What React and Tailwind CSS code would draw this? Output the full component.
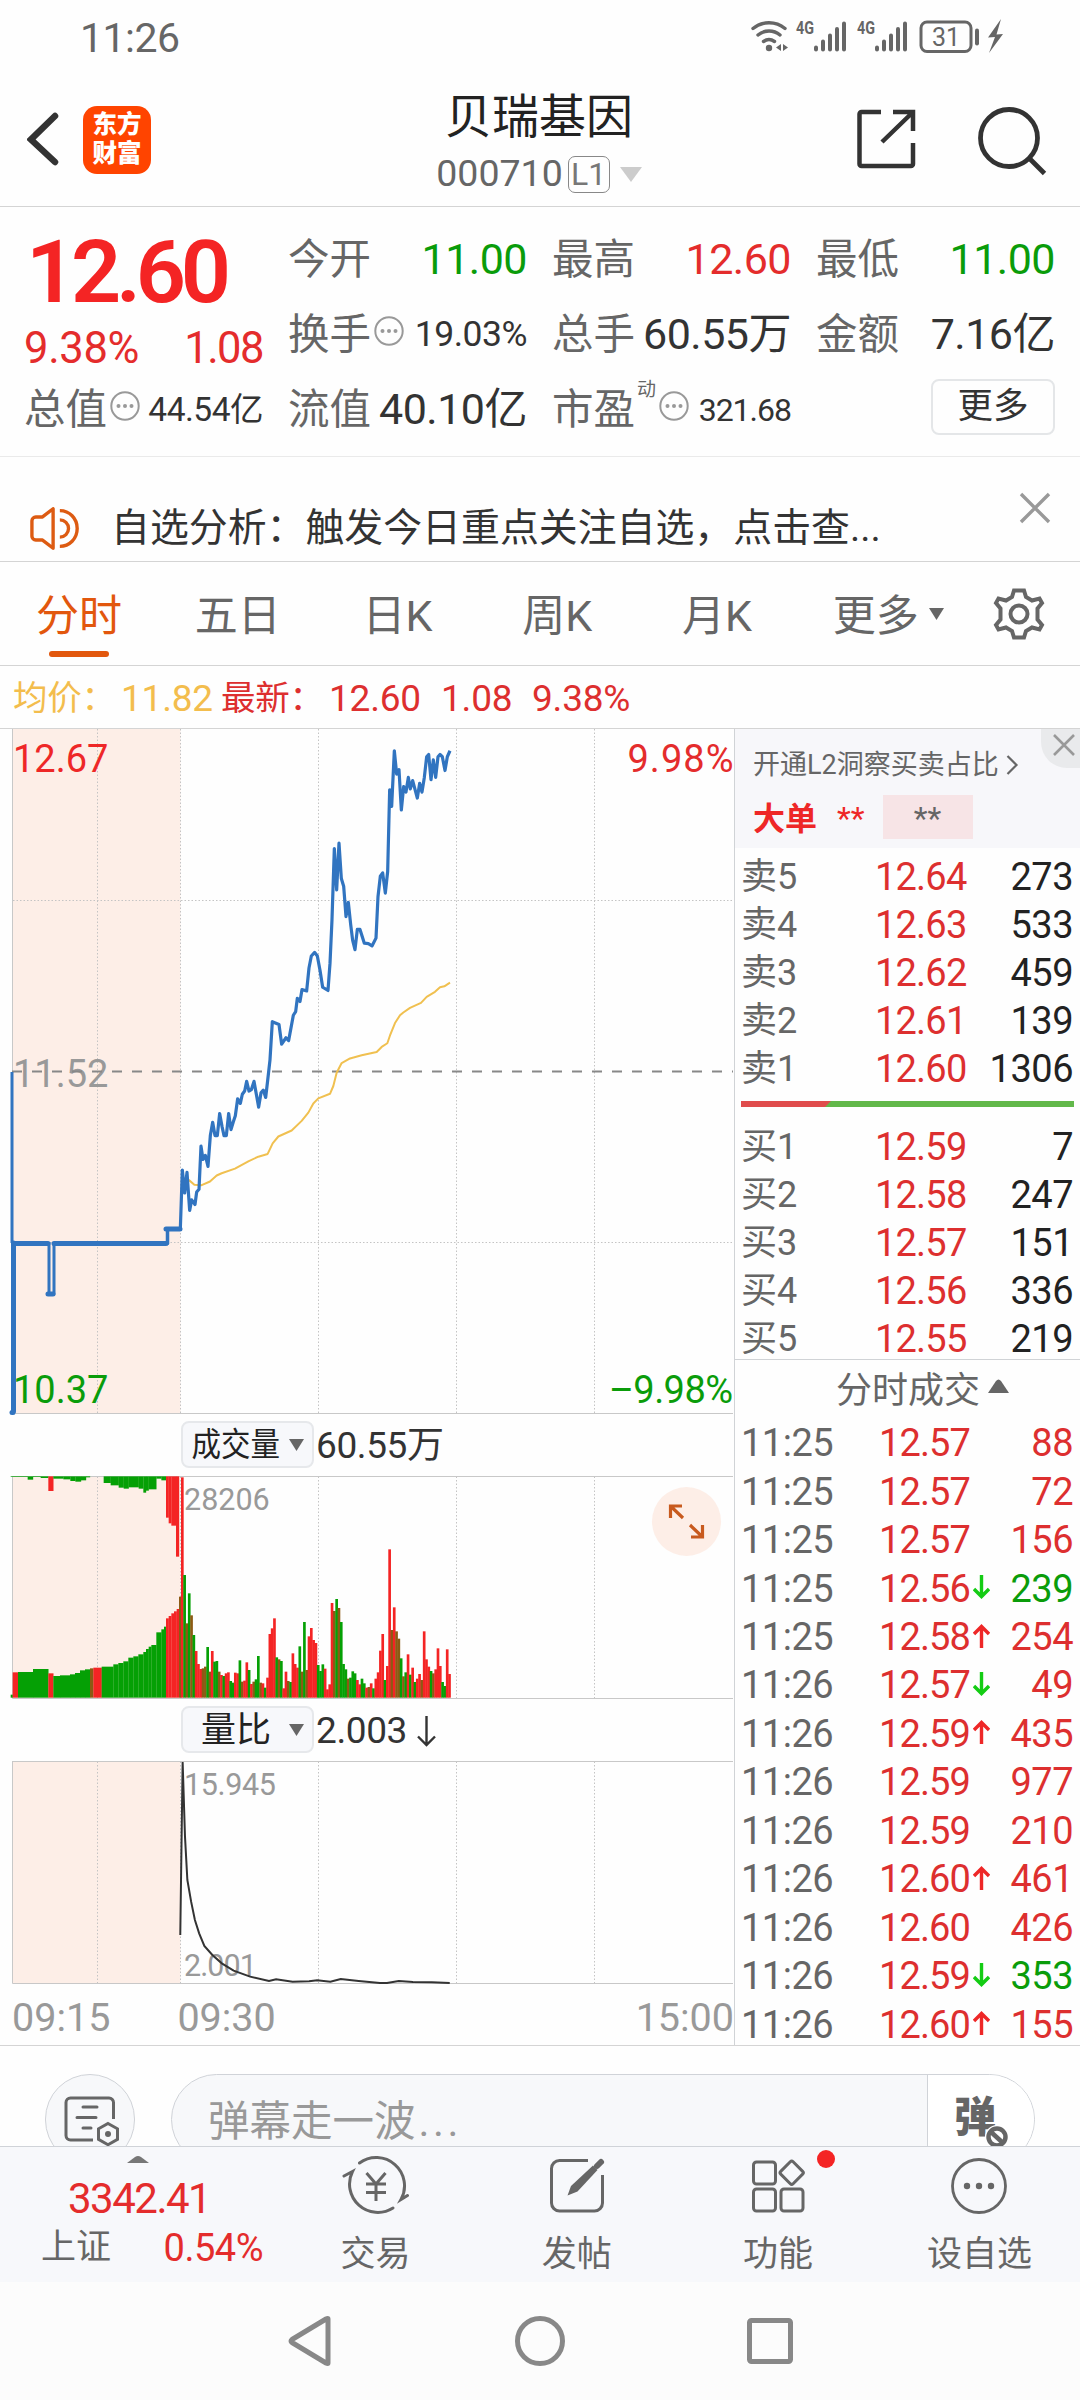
import React from 'react';

const sells = [
  ['卖5', '12.64', '273'],
  ['卖4', '12.63', '533'],
  ['卖3', '12.62', '459'],
  ['卖2', '12.61', '139'],
  ['卖1', '12.60', '1306'],
];

const buys = [
  ['买1', '12.59', '7'],
  ['买2', '12.58', '247'],
  ['买3', '12.57', '151'],
  ['买4', '12.56', '336'],
  ['买5', '12.55', '219'],
];

// time, price, direction, volume
const ticks = [
  ['11:25', '12.57', '', '88'],
  ['11:25', '12.57', '', '72'],
  ['11:25', '12.57', '', '156'],
  ['11:25', '12.56', 'down', '239'],
  ['11:25', '12.58', 'up', '254'],
  ['11:26', '12.57', 'down', '49'],
  ['11:26', '12.59', 'up', '435'],
  ['11:26', '12.59', '', '977'],
  ['11:26', '12.59', '', '210'],
  ['11:26', '12.60', 'up', '461'],
  ['11:26', '12.60', '', '426'],
  ['11:26', '12.59', 'down', '353'],
  ['11:26', '12.60', 'up', '155'],
];

const pricePoints =
  '541,1108 547,980 554,1030 561,985 569,1068 575,1045 585,1055 590,1028 597,1022 603,928 609,957 616,948 624,972 631,905 638,876 645,905 652,905 659,857 666,885 672,905 679,905 686,857 693,892 700,875 706,862 713,825 721,835 727,815 734,808 740,787 747,808 754,805 762,787 769,815 776,843 783,812 790,806 797,822 803,785 810,740 817,657 837,663 845,706 858,692 866,698 880,643 887,635 892,606 900,613 906,587 920,590 927,540 934,514 944,506 952,514 960,545 968,582 984,589 990,530 996,435 1003,280 1010,370 1017,268 1024,345 1031,362 1038,428 1045,397 1052,445 1058,480 1065,500 1072,456 1080,456 1093,486 1105,487 1116,492 1128,475 1134,385 1141,340 1148,333 1156,377 1163,330 1169,152 1175,188 1183,67 1190,118 1197,108 1204,196 1211,145 1218,157 1225,125 1231,150 1238,132 1252,170 1259,138 1266,157 1273,125 1280,80 1286,75 1293,130 1300,87 1307,125 1314,80 1320,75 1327,80 1335,110 1342,80 1350,67';

const avgPoints =
  '547,1000 567,1002 583,1012 605,1013 630,1005 650,992 665,987 705,977 745,961 775,951 803,945 818,922 835,907 875,894 905,873 925,855 940,835 955,824 990,814 1000,797 1010,768 1025,747 1050,737 1085,730 1130,723 1145,712 1162,704 1170,687 1185,660 1200,643 1210,637 1230,627 1263,616 1280,603 1305,592 1320,582 1333,580 1350,572';

const ratioPoints =
  '382,705 387,186 392,410 397,540 405,605 413,660 422,700 433,738 450,765 470,790 495,812 530,830 570,843 585,838 620,845 655,844 672,841 700,845 722,837 760,843 805,849 820,849 845,843 875,846 915,847 953,849';

// one entry per minute from 09:30, colour key + top of the bar
const volumeBars =
  'r232 g525 b670 g580 b646 g705 r753 r792 r807 b805 b800 g741 b815 r753 g785 g783 b815 r825 g828 r820 r817 g843 g848 r818 r820 g781 b845 r842 r787 g810 r852 b845 g838 g768 b848 r850 g863 r833 r702 r685 r655 g772 b778 g783 r865 r815 b843 g846 r760 r792 r803 g739 b815 g666 b810 r709 r684 r720 r729 g795 g813 g793 r806 r868 r853 r609 b633 g597 b624 g666 g792 g808 b836 g833 g814 g820 r840 r853 g836 g850 r863 b861 r850 g865 r836 r817 r752 r702 g840 r798 r448 b690 r622 b694 b716 g775 b829 g817 r763 g824 r803 g846 r836 r822 b840 r694 r778 r800 g813 b820 r808 r745 r798 g846 g858 r748 r822'.split(' ');

const auctionBottom = [
  ['g', 32, 38, 884], ['r', 38, 54, 817], ['g', 54, 99, 816], ['g', 99, 145, 807], ['r', 145, 160, 820],
  ['g', 160, 180, 828], ['g', 180, 210, 826], ['g', 210, 225, 823], ['g', 225, 240, 819], ['g', 240, 255, 811],
  ['g', 255, 270, 808], ['b', 270, 280, 805], ['r', 280, 305, 803], ['g', 305, 340, 800], ['g', 340, 355, 793],
  ['g', 355, 370, 789], ['g', 370, 385, 784], ['g', 385, 400, 773], ['g', 400, 415, 769], ['g', 415, 430, 763],
  ['g', 430, 438, 756], ['g', 438, 446, 747], ['g', 446, 454, 740], ['g', 454, 469, 735], ['g', 469, 484, 697],
  ['g', 484, 492, 688], ['g', 492, 498, 680], ['r', 498, 506, 655], ['r', 506, 514, 648], ['r', 514, 522, 640],
  ['r', 522, 530, 634], ['r', 530, 537, 627], ['b', 537, 544, 590],
];

const auctionTop = [
  ['g', 32, 83, 231], ['g', 83, 99, 239], ['g', 99, 122, 231], ['g', 122, 145, 234], ['r', 145, 160, 273],
  ['g', 160, 190, 236], ['g', 190, 211, 238], ['g', 211, 226, 243], ['g', 226, 243, 245], ['g', 243, 258, 241],
  ['g', 258, 270, 232], ['g', 311, 332, 249], ['g', 332, 356, 256], ['g', 356, 371, 263], ['g', 371, 386, 266],
  ['g', 386, 416, 262], ['g', 416, 430, 266], ['g', 430, 438, 278], ['g', 438, 446, 272], ['g', 446, 469, 268],
  ['g', 469, 484, 236], ['g', 484, 498, 241], ['r', 498, 506, 353], ['r', 506, 514, 370], ['r', 514, 528, 377],
  ['r', 528, 537, 470],
];

const fills = { r: '#f42424', g: '#05a005', b: '#8c5a14' };

const StatusBar = () => (
  <div className="flex h-[72px] items-center justify-between pl-[80px] pr-[72px] pt-[4px]">
    <span className="text-[41px] leading-none tracking-[-0.5px] text-[#666]">11:26</span>
    <svg width="260" height="40" viewBox="748 18 260 40" fill="none" stroke="#666">
      {/* wifi */}
      <g strokeWidth="3.4" strokeLinecap="round">
        <path d="M753 28.500a25 25 0 0 1 32 0" />
        <path d="M758 35a17 17 0 0 1 22 0" />
        <path d="M763.500 41.500a9.500 9.500 0 0 1 11 0" />
      </g>
      <circle cx="769" cy="48" r="3.200" fill="#666" stroke="none" />
      <path d="M781 44v7l-5-3.500zM783 44v7l5-3.500z" fill="#666" stroke="none" />
      {/* two signal meters */}
      {[0, 61].map((dx) => (
        <g key={dx} transform={`translate(${dx} 0)`}>
          <text x="796" y="34" fontSize="17.5" fontWeight="700" fill="#666" stroke="none" textLength="18" lengthAdjust="spacingAndGlyphs">4G</text>
          <path d="M816 47.500v2M823 41.500v8M830 35.500v14M837 29v20.500M844 23.500v26" strokeWidth="4" strokeLinecap="round" />
        </g>
      ))}
      <rect x="921" y="22" width="50" height="29.500" rx="6" strokeWidth="3" />
      <text x="946" y="45.500" fontSize="25" textAnchor="middle" fill="#666" stroke="none">31</text>
      <path d="M977 30.500v13" strokeWidth="4" strokeLinecap="round" />
      <path d="M1001 19l-13 18.500 7-.5-6 16 14-19-6.500.5z" fill="#666" stroke="none" />
    </svg>
  </div>
);

const Header = () => (
  <header className="grid h-[135px] grid-cols-[1fr_auto_1fr] border-b border-[#d4d4d4] px-[27px]">
    <div className="flex gap-[24px] pt-[34px]">
      <svg className="mt-[5px]" width="32" height="56" viewBox="0 0 32 56" fill="none" stroke="#333" strokeWidth="6.500" strokeLinecap="round">
        <path d="M28 5L4 28.500 28 51" />
      </svg>
      <div className="flex h-[68px] w-[68px] flex-col items-center justify-center rounded-[14px] bg-[#ff4400] pb-[2px] text-[24.500px] font-black leading-[29px] text-white">
        <span>东方</span>
        <span>财富</span>
      </div>
    </div>
    <div className="flex flex-col items-center pr-[2px] pt-[19px]">
      <h1 className="text-[47px] leading-[52px] text-[#222]">贝瑞基因</h1>
      <div className="mt-[12px] flex h-[38px] items-center">
        <span className="text-[37.500px] leading-none text-[#666]">000710</span>
        <span className="ml-[5px] flex h-[37px] w-[42px] items-center justify-center rounded-[7px] border border-[#888] text-[32px] leading-none text-[#777]">L1</span>
        <svg className="ml-[10px]" width="22" height="15" viewBox="0 0 22 15" fill="#ccc">
          <path d="M0 0h22L11 15z" />
        </svg>
      </div>
    </div>
    <div className="flex justify-end gap-[59px] pr-[6px] pt-[34px]">
      <svg width="62" height="64" viewBox="856 107 62 64" fill="none" stroke="#333" strokeWidth="4.500">
        <path d="M881 113H861.500a2 2 0 0 0-2 2v50a2 2 0 0 0 2 2H911a2 2 0 0 0 2-2V144" />
        <path d="M893 113h20v19M912 114l-30 29" />
      </svg>
      <svg width="70" height="72" viewBox="977 104 70 72" fill="none" stroke="#333" strokeWidth="4.800">
        <circle cx="1009" cy="136" r="28.500" />
        <path d="M1030 157l14.500 14.500" />
      </svg>
    </div>
  </header>
);

const Dots = ({ className }) => (
  <svg className={className} width="30" height="30" viewBox="0 0 30 30" fill="#999">
    <circle cx="15" cy="15" r="13.700" fill="none" stroke="#999" strokeWidth="2" />
    <circle cx="8.500" cy="15" r="2" />
    <circle cx="15" cy="15" r="2" />
    <circle cx="21.500" cy="15" r="2" />
  </svg>
);

const Cell = ({ label, value, tone = 'text-[#333]', size = 'text-[43px] tracking-[-0.500px]', dots }) => (
  <div className="flex h-[75px] items-center justify-between whitespace-nowrap">
    <span className="flex items-center text-[41.500px] leading-none text-[#666]">
      {label}
      {dots && <Dots className="-mt-[8px] ml-[3px]" />}
    </span>
    <span className={`${size} leading-none ${tone}`}>{value}</span>
  </div>
);

const Quote = () => (
  <section className="grid h-[250px] grid-cols-[239px_239px_239px_239px] gap-x-[25px] border-b border-[#eaeaea] pl-[24px] pt-[15px]">
    <div>
      <div className="flex h-[100px] items-center pl-[2px] text-[88px] font-semibold leading-none tracking-[-5.300px] text-[#f42424]">12.60</div>
      <div className="flex h-[50px] items-center justify-between pt-[3px] text-[43.500px] leading-none tracking-[-0.300px] text-[#e42c2c]">
        <span>9.38%</span>
        <span className="tracking-[-1.500px]">1.08</span>
      </div>
      <Cell label="总值" value="44.54亿" size="text-[33.500px] tracking-[-0.500px]" dots />
    </div>
    <div>
      <Cell label="今开" value="11.00" tone="text-[#0a9c0a]" />
      <Cell label="换手" value="19.03%" size="text-[35.500px] tracking-[-0.500px]" dots />
      <Cell label="流值" value="40.10亿" />
    </div>
    <div>
      <Cell label="最高" value="12.60" tone="text-[#e42c2c]" />
      <Cell label="总手" value="60.55万" />
      <Cell
        label={<>市盈<span className="-mt-[40px] ml-[2px] text-[19px]">动</span></>}
        value="321.68"
        size="text-[32px] tracking-[-1px]"
        dots
      />
    </div>
    <div>
      <Cell label="最低" value="11.00" tone="text-[#0a9c0a]" />
      <Cell label="金额" value="7.16亿" />
      <button className="ml-auto mt-[7px] flex h-[56px] w-[124px] items-center justify-center rounded-[8px] border-2 border-[#e4e6e8] text-[35.500px] leading-none text-[#333]">更多</button>
    </div>
  </section>
);

const Notice = () => (
  <section className="flex h-[105px] justify-between border-b border-[#d4d4d4] pl-[30px] pr-[29px]">
    <div className="flex items-center pt-[38px]">
      <svg width="52" height="43" viewBox="0 0 54 44" fill="none" stroke="#dd5b12" strokeWidth="3.500">
        <path d="M24 1.500v41L13 34H6a4 4 0 0 1-4-4V14a4 4 0 0 1 4-4h7z" strokeLinejoin="round" />
        <path d="M31 3.500c10 0 18 8 18 18.500s-8 18.500-18 18.500M31 13c5 0 9 4 9 9s-4 9-9 9" />
      </svg>
      <p className="ml-[29px] whitespace-nowrap pt-[1px] text-[38.900px] leading-none text-[#333]">自选分析：触发今日重点关注自选，点击查...</p>
    </div>
    <svg className="mt-[35px]" width="32" height="32" viewBox="0 0 32 32" stroke="#999" strokeWidth="3.400">
      <path d="M2 2l28 28M30 2L2 30" />
    </svg>
  </section>
);

const Tabs = () => (
  <nav className="flex h-[104px] items-center border-b border-[#d4d4d4] text-[43px] leading-none text-[#666]">
    <div className="relative flex h-full w-[158px] items-center justify-center pt-[6px] text-[#e2570d]">
      分时
      <span className="absolute bottom-[8px] h-[6px] w-[60px] rounded-full bg-[#e2570d]" />
    </div>
    {['五日', '日K', '周K', '月K'].map((t) => (
      <div key={t} className="w-[159.700px] pt-[6px] text-center">{t}</div>
    ))}
    <div className="ml-[36px] pt-[6px]">更多</div>
    <svg className="ml-[10px]" width="15" height="12" viewBox="0 0 15 12" fill="#666"><path d="M0 0h15L7.500 12z" /></svg>
    <svg className="ml-[49px]" width="52" height="54" viewBox="-26 -27 52 54" fill="none" stroke="#666" strokeWidth="4">
      <path d="M-5-23.500H5L7-17 13-13.500l7.500-2 2.500 4.500-4.500 5.500v11l4.500 5.500-2.500 4.500-7.500-2L7 17 5 23.500H-5L-7 17-13 13.500l-7.500 2-2.500-4.500 4.500-5.500v-11l-4.500-5.500 2.500-4.500 7.500 2L-7-17z" />
      <circle r="8.500" />
    </svg>
  </nav>
);

const Latest = () => (
  <div className="flex h-[63px] items-center whitespace-pre border-b border-[#d4d4d4] pl-[13px] pt-[3px] text-[37px] leading-none tracking-[-0.200px] text-[#dd2f2f]">
    <span className="w-[108px] text-[34.500px] text-[#f3bd4d]">均价：</span>
    <span className="w-[100px] text-[#f3bd4d]">11.82</span>
    <span className="w-[108px] text-[34.500px]">最新：</span>
    <span className="w-[112px]">12.60</span>
    <span className="w-[91px]">1.08</span>
    <span>9.38%</span>
  </div>
);

const Grid = ({ top, bottom, lines = [] }) => (
  <g>
    <rect x="13" y={top} width="167.500" height={bottom - top} fill="#fdeee7" />
    <g stroke="#c4c4c4" strokeWidth="1" strokeDasharray="1.500 2">
      {[97.5, 180.5, 318.5, 456.5, 594.5].map((x) => (
        <path key={x} d={`M${x} ${top}V${bottom}`} />
      ))}
      {lines.map((y) => (
        <path key={y} d={`M13 ${y}H733`} />
      ))}
    </g>
    <path d={`M12.500 ${top}V${bottom}H733`} fill="none" stroke="#c8c8c8" />
  </g>
);

const PriceChart = () => (
  <svg className="block" width="733" height="689" viewBox="0 729 733 689">
    <Grid top={729} bottom={1413.5} lines={[900.5, 1242.5]} />
    <g fontSize="38">
      <text x="13" y="772" fill="#ee2727">12.67</text>
      <text x="627.500" y="772" textLength="106" fill="#e42c2c">9.98%</text>
      <text x="13" y="1087" fill="#999">11.52</text>
      <text x="13" y="1402.500" fill="#0a9c0a">10.37</text>
      <text x="609" y="1402.500" textLength="124" fill="#0a9c0a">–9.98%</text>
    </g>
    <path d="M12 1071.500H733" stroke="#888" strokeWidth="2" strokeDasharray="10 10" />
    <g transform="translate(0 720) scale(.33333 .4592)" fill="none" strokeLinejoin="round">
      <polyline points={avgPoints} stroke="#f0c050" strokeWidth="2" vectorEffect="non-scaling-stroke" />
      <polyline points={pricePoints} stroke="#3174c0" strokeWidth="3.200" vectorEffect="non-scaling-stroke" />
    </g>
    <g fill="none" stroke="#3174c0" strokeLinecap="round">
      <path d="M12 1072V1243" strokeWidth="3" strokeLinecap="butt" />
      <path d="M13.500 1243V1411" strokeWidth="5" />
      <path d="M12 1412.500h1" strokeWidth="5" />
      <path d="M14 1243.500H49V1293.500M48 1294H54M54 1293.500V1243.500" strokeWidth="3" />
      <path d="M14 1243.500H48M54 1243.500H166M166 1229H180M48 1294H53" strokeWidth="5" />
      <path d="M167.500 1243.500V1229" strokeWidth="3.500" />
    </g>
  </svg>
);

const VolumeChart = () => (
  <svg className="block" width="733" height="224" viewBox="0 1476 733 224">
    <Grid top={1476.5} bottom={1698.5} />
    <path d="M12 1476.500H733" stroke="#c8c8c8" />
    <g transform="translate(0 1400) scale(.33333)">
      {auctionBottom.map(([c, x, end, y]) => (
        <rect key={x} x={x} y={y} width={end - x + 0.5} height={893 - y} fill={fills[c]} />
      ))}
      {auctionTop.map(([c, x, end, y]) => (
        <rect key={x} x={x} y="229" width={end - x + 0.5} height={y - 229} fill={fills[c]} />
      ))}
      {volumeBars.map((bar, i) => (
        <rect key={i} x={543 + i * 6.91} y={+bar.slice(1)} width="8" height={893 - bar.slice(1)} fill={fills[bar[0]]} />
      ))}
    </g>
    <text x="184" y="1509.500" fontSize="30.500" fill="#999">28206</text>
    <circle cx="686.500" cy="1521.500" r="34.500" fill="#fdeee7" />
    <path d="M670.500 1518v-12H682M671.500 1507l11.500 11M702.500 1525v12H691M701.500 1536l-11.500-11" fill="none" stroke="#c85a1e" strokeWidth="3.200" />
  </svg>
);

const RatioChart = () => (
  <svg className="block" width="733" height="224" viewBox="0 1761 733 224">
    <Grid top={1761.5} bottom={1983.5} />
    <path d="M12 1761.500H733" stroke="#c8c8c8" />
    <g fontSize="30.500" fill="#999">
      <text x="184" y="1795" textLength="92">15.945</text>
      <text x="184" y="1976" textLength="73">2.001</text>
    </g>
    <g transform="translate(0 1700) scale(.47193 .33333)">
      <polyline points={ratioPoints} fill="none" stroke="#333" strokeWidth="2" vectorEffect="non-scaling-stroke" />
    </g>
  </svg>
);

const Indicator = ({ name, value, arrow }) => (
  <div className="flex items-center pl-[181px]">
    <div className="flex h-[47px] w-[133px] items-center justify-end rounded-[8px] border-2 border-[#e6e8eb] bg-[#f7f8fb] pr-[8px] text-[#222]">
      <span className={`${arrow ? 'mr-[18px] text-[35px]' : 'mr-[9px] scale-y-[1.1] text-[29.500px]'} pt-[2px] leading-none`}>{name}</span>
      <svg width="15" height="12" viewBox="0 0 15 12" fill="#666"><path d="M0 0h15L7.500 12z" /></svg>
    </div>
    <span className="ml-[2px] flex items-center pt-[2px] text-[37px] leading-none tracking-[-0.400px] text-[#333]">
      {value}
      {arrow && (
        <svg className="ml-[10px]" width="19" height="32" viewBox="0 0 19 32" fill="none" stroke="#333" strokeWidth="2.400">
          <path d="M9.500 1v29M1 21.500l8.500 8.500 8.500-8.500" />
        </svg>
      )}
    </span>
  </div>
);

const Charts = () => (
  <div className="w-[735px] shrink-0 border-r border-[#d0d3d6]">
    <PriceChart />
    <div className="mt-[3px] h-[55px]"><Indicator name="成交量" value="60.55万" /></div>
    <VolumeChart />
    <div className="mt-[6px] h-[55px]"><Indicator name="量比" value="2.003" arrow /></div>
    <RatioChart />
    <div className="flex items-center pl-[12px] pt-[13px] text-[39.500px] leading-none text-[#999]">
      <span>09:15</span>
      <span className="ml-[67px]">09:30</span>
      <span className="ml-auto">15:00</span>
    </div>
  </div>
);

const BookRow = ({ row }) => (
  <div className="flex h-[48px] items-center justify-between pt-[2px] text-[38px] leading-none tracking-[-0.500px]">
    <span className="w-[90px] text-[36px] tracking-normal text-[#666]">{row[0]}</span>
    <span className="ml-[44px] flex-1 tracking-[-0.800px] text-[#dd2f2f]">{row[1]}</span>
    <span className="text-[#222]">{row[2]}</span>
  </div>
);

const Arrow = ({ dir }) => (
  <svg className="ml-[3px] mt-[-3px]" width="17" height="24" viewBox="0 0 17 24" fill="none" stroke={dir === 'up' ? '#ee2727' : '#14cc14'} strokeWidth="3.400">
    <path d={dir === 'up' ? 'M8.500 24V3M1 10l7.500-7.500 7.500 7.500' : 'M8.500 0v21M1 14l7.500 7.500 7.500-7.500'} />
  </svg>
);

const OrderBook = () => (
  <aside className="min-w-0 flex-1">
    <div className="relative h-[119px] bg-[#f7f7fa] pl-[18px] pt-[20px]">
      <div className="flex items-center text-[27px] leading-[32px] text-[#666]">
        开通L2洞察买卖占比
        <svg className="ml-[7px]" width="13" height="20" viewBox="0 0 13 20" fill="none" stroke="#666" strokeWidth="2.200"><path d="M1.500 1l9 9-9 9" /></svg>
      </div>
      <div className="mt-[14px] flex h-[44px] items-center">
        <b className="pt-[3px] text-[32px] leading-none text-[#ee2727]">大单</b>
        <span className="ml-[20px] pt-[2px] text-[32px] leading-none text-[#ee2727]">**</span>
        <span className="ml-[18px] flex h-[44px] w-[90px] items-center justify-center bg-[#f7e4e6] pt-[2px] text-[32px] leading-none text-[#666]">**</span>
      </div>
      <div className="absolute right-0 top-0 flex h-[39px] w-[39px] justify-center rounded-bl-[26px] bg-[#e9eaec] pl-[6px] pt-[5px]">
        <svg width="22" height="22" viewBox="0 0 22 22" stroke="#999" strokeWidth="2.600"><path d="M1 1l20 20M21 1L1 21" /></svg>
      </div>
    </div>
    <div className="pl-[6px] pr-[7px] pt-[4px]">
      {sells.map((row) => <BookRow key={row[0]} row={row} />)}
    </div>
    <svg className="ml-[6px] mt-[9px] block" width="333" height="6" viewBox="0 0 333 6">
      <path d="M0 0H333V6H0z" fill="#62b84a" />
      <path d="M0 0H90L84 6H0z" fill="#e04c4c" />
    </svg>
    <div className="pl-[6px] pr-[7px] pt-[15px]">
      {buys.map((row) => <BookRow key={row[0]} row={row} />)}
    </div>
    <div className="mt-[-3px] flex h-[59px] items-center border-t border-[#d0d3d6] pl-[101px] pt-[3px] text-[36px] leading-none text-[#666]">
      分时成交
      <svg className="ml-[8px] mt-[-9px]" width="21" height="14" viewBox="0 0 21 14" fill="#666"><path d="M0 14l8-12q2.500-3 5 0l8 12z" /></svg>
    </div>
    <div className="pl-[6px] pr-[7px] pt-[1px] text-[38px] leading-none tracking-[-0.500px] text-[#dd2f2f]">
      {ticks.map(([time, price, dir, vol], i) => (
        <div key={i} className="flex h-[48.460px] items-center">
          <span className="w-[138px] text-[#666]">{time}</span>
          <span className="flex flex-1 items-center tracking-[-0.900px]">
            {price}
            {dir && <Arrow dir={dir} />}
          </span>
          <span className={dir === 'down' && vol !== '49' ? 'text-[#0a9c0a]' : ''}>{vol}</span>
        </div>
      ))}
    </div>
  </aside>
);

const CommentBar = () => (
  <div className="flex h-[100px] items-start overflow-hidden pl-[45px] pt-[28px]">
    <div className="flex h-[91px] w-[90px] shrink-0 justify-center rounded-full border border-[#d0d3d8] bg-[#f7f8fa] pt-[19px]">
      <svg width="58" height="56" viewBox="61 2094 58 56" fill="none" stroke="#666" strokeWidth="3">
        <path d="M93 2140H70.500a4.500 4.500 0 0 1-4.500-4.500v-33a4.500 4.500 0 0 1 4.500-4.500H109a4.500 4.500 0 0 1 4.500 4.500V2119" />
        <path d="M83 2107h14M77 2117.500h19M83 2128h8" strokeLinecap="round" />
        <path d="M108 2123.500l9.500 5.300v10.600l-9.500 5.300-9.500-5.300v-10.600z" />
        <circle cx="108" cy="2134" r="3" fill="#666" stroke="none" />
      </svg>
    </div>
    <div className="ml-[36px] flex h-[91px] w-[864px] overflow-hidden rounded-full border border-[#d0d3d8] bg-[#f7f8fa]">
      <span className="flex-1 pl-[36px] pt-[26px] text-[41.500px] leading-none text-[#999]">弹幕走一波<span className="ml-[3px] tracking-[3.500px]">...</span></span>
      <div className="relative w-[107px] border-l border-[#d0d3d8] bg-white pl-[26px] pt-[22px] text-[42px] font-black leading-none text-[#666]">
        弹
        <svg className="absolute left-[57px] top-[50px]" width="24" height="24" viewBox="0 0 24 24" fill="white" stroke="#666" strokeWidth="4.500">
          <circle cx="12" cy="12" r="11" stroke="white" strokeWidth="2" />
          <circle cx="12" cy="12" r="8.500" />
          <path d="M6 7l12 11" />
        </svg>
      </div>
    </div>
  </div>
);

const BottomBar = () => (
  <footer className="flex h-[136px] border-t border-[#d0d3d8] bg-[#f7f8fb] text-[#666]">
    <div className="w-[275px] pt-[8px]">
      <svg className="ml-[127px] block" width="22" height="8" viewBox="0 0 22 8" fill="#777"><path d="M0 8l8-6q3-2 6 0l8 6z" /></svg>
      <div className="ml-[68px] mt-[16px] text-[42px] leading-[40px] tracking-[-1.500px] text-[#e42c2c]">3342.41</div>
      <div className="ml-[41px] mt-[9px] flex w-[222px] items-center justify-between leading-[40px]">
        <span className="text-[35px]">上证</span>
        <span className="text-[38px] tracking-[-0.500px] text-[#e42c2c]">0.54%</span>
      </div>
    </div>
    <div className="flex w-[201.300px] flex-col items-center pt-[9px]">
      <svg width="68" height="60" viewBox="342 2156 68 60" fill="none" stroke="#666" strokeWidth="3" strokeLinecap="round">
        <path d="M359.500 2163A28.300 28.300 0 0 1 401 2199.500L407.500 2195.500" />
        <path d="M393 2208A28.300 28.300 0 0 1 352.500 2171.500L344 2176" />
        <path d="M366.500 2173l9.500 11 9.500-11M376 2184v17M366 2184h20M366 2192.500h20" strokeLinecap="butt" />
      </svg>
      <span className="mt-[13px] text-[35px] leading-[52px]">交易</span>
    </div>
    <div className="flex w-[201.300px] flex-col items-center pt-[9px]">
      <svg width="60" height="60" viewBox="547 2156 60 60" fill="none" stroke="#666" strokeWidth="3">
        <path d="M588 2160.500H559.500a8 8 0 0 0-8 8V2203a8 8 0 0 0 8 8H594.500a8 8 0 0 0 8-8V2175" />
        <path d="M593 2165.500l4.500 4.500-20 21.500-10 4 3.500-9.500z" fill="#666" stroke="none" />
        <path d="M597 2166l4-4" strokeWidth="6" strokeLinecap="round" />
      </svg>
      <span className="mt-[13px] text-[35px] leading-[52px]">发帖</span>
    </div>
    <div className="relative flex w-[201.300px] flex-col items-center pt-[9px]">
      <svg width="60" height="60" viewBox="748 2156 60 60" fill="none" stroke="#666" strokeWidth="3">
        <rect x="753.500" y="2162" width="22" height="22" rx="3" />
        <rect x="753.500" y="2189" width="22" height="22" rx="3" />
        <rect x="781" y="2189" width="22" height="22" rx="3" />
        <rect x="783" y="2164" width="17.500" height="17.500" rx="2" transform="rotate(45 791.700 2172.700)" />
      </svg>
      <span className="mt-[13px] text-[35px] leading-[52px]">功能</span>
      <i className="absolute left-[140px] top-[3px] h-[18px] w-[18px] rounded-full bg-[#f42424]" />
    </div>
    <div className="flex w-[201.300px] flex-col items-center pt-[9px]">
      <svg width="60" height="60" viewBox="-30 -30 60 60" fill="#666">
        <circle r="26.500" fill="none" stroke="#666" strokeWidth="2.800" />
        <circle cx="-12" r="3.200" />
        <circle r="3.200" />
        <circle cx="12" r="3.200" />
      </svg>
      <span className="mt-[13px] text-[35px] leading-[52px]">设自选</span>
    </div>
  </footer>
);

const SystemNav = () => (
  <div className="flex h-[118px] items-center justify-center gap-[181px] bg-[#fcfcfc]">
    <svg width="48" height="52" viewBox="0 0 48 52" fill="none" stroke="#888" strokeWidth="5" strokeLinejoin="round">
      <path d="M42 4v44q0 1-2 0L6 27.500q-2-1.500 0-3L40 4q2-1 2 0z" />
    </svg>
    <svg width="50" height="50" viewBox="0 0 50 50" fill="none" stroke="#888" strokeWidth="5">
      <circle cx="25" cy="25" r="22.500" />
    </svg>
    <svg width="48" height="48" viewBox="0 0 48 48" fill="none" stroke="#888" strokeWidth="5">
      <rect x="3.500" y="3.500" width="41" height="41" rx="2" />
    </svg>
  </div>
);

const App = () => {
  return (
    <div className="h-[2400px] w-[1080px] overflow-hidden bg-[#fefefe] font-[Roboto,'Noto_Sans_CJK_SC',sans-serif]">
      <StatusBar />
      <Header />
      <Quote />
      <Notice />
      <Tabs />
      <Latest />
      <main className="flex h-[1317px] overflow-hidden border-b border-[#d4d4d4]">
        <Charts />
        <OrderBook />
      </main>
      <CommentBar />
      <BottomBar />
      <SystemNav />
    </div>
  );
};

export default App;
